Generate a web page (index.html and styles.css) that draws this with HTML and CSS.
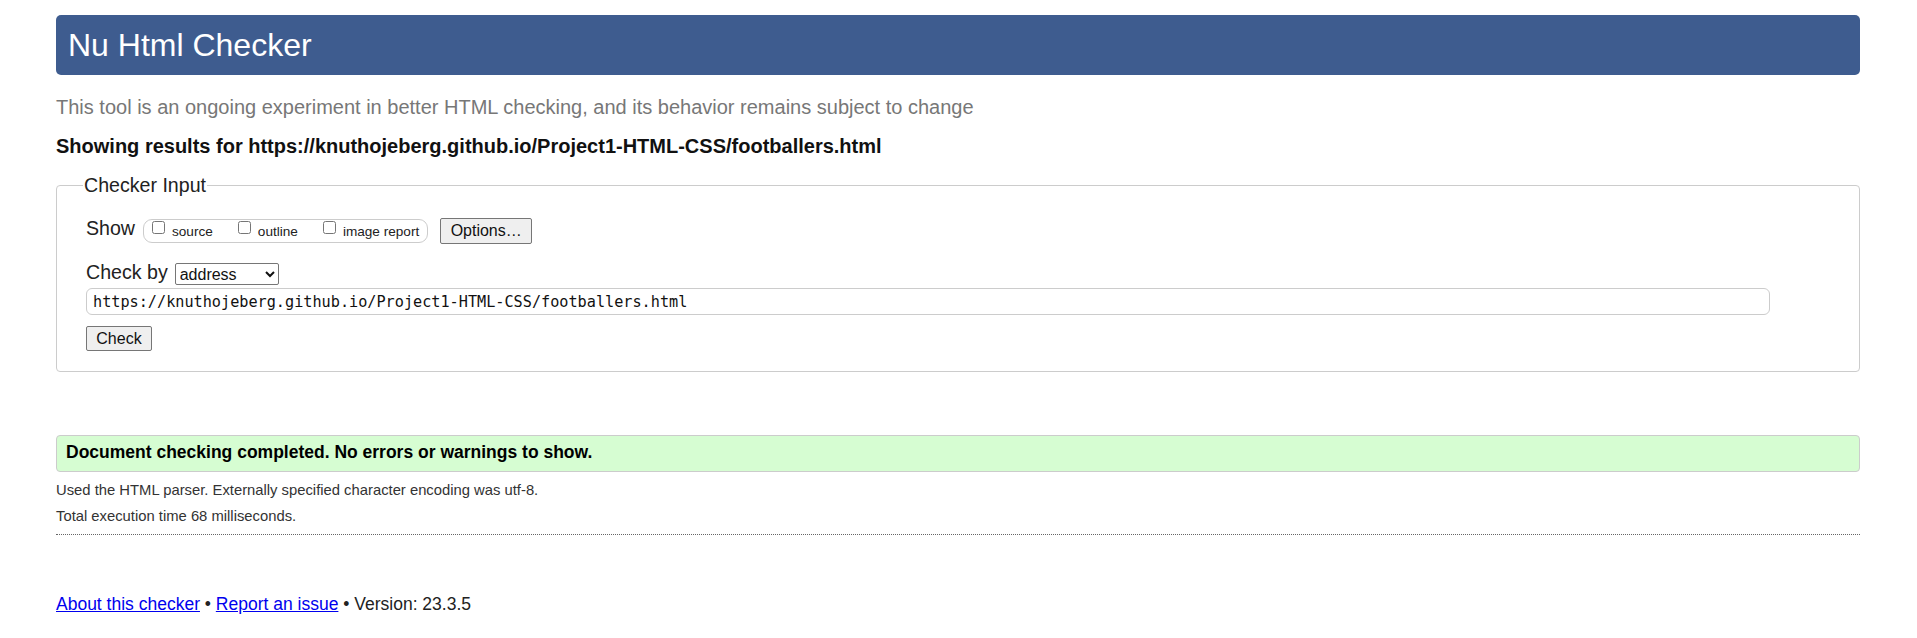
FILE: index.html
```html
<!DOCTYPE html>
<html lang="en">
<head>
<meta charset="utf-8">
<title>Nu Html Checker</title>
<link rel="stylesheet" href="styles.css">
</head>
<body>
<div class="page">
  <h1 class="banner">Nu Html Checker</h1>
  <p class="lede">This tool is an ongoing experiment in better HTML checking, and its behavior remains subject to change</p>
  <p class="showing">Showing results for https://knuthojeberg.github.io/Project1-HTML-CSS/footballers.html</p>
  <fieldset class="input-box">
    <legend class="input-legend">Checker Input</legend>
    <div class="show-row">
      <span class="row-label">Show</span>
      <span class="pill">
        <label class="opt"><input type="checkbox" class="cb"><span class="opt-text">source</span></label>
        <label class="opt"><input type="checkbox" class="cb"><span class="opt-text">outline</span></label>
        <label class="opt"><input type="checkbox" class="cb"><span class="opt-text">image report</span></label>
      </span>
      <button class="btn btn-options" type="button">Options…</button>
    </div>
    <div class="by-row">
      <span class="row-label">Check by</span>
      <select class="sel"><option>address</option></select>
    </div>
    <div class="url-row">
      <input class="url" type="text" value="https://knuthojeberg.github.io/Project1-HTML-CSS/footballers.html">
    </div>
    <div class="check-row">
      <button class="btn btn-check" type="button">Check</button>
    </div>
  </fieldset>
  <div class="success">Document checking completed. No errors or warnings to show.</div>
  <p class="meta">Used the HTML parser. Externally specified character encoding was utf-8.</p>
  <p class="meta meta-second">Total execution time 68 milliseconds.</p>
  <hr class="rule">
  <p class="footer"><a href="#">About this checker</a> • <a href="#">Report an issue</a> • Version: 23.3.5</p>
</div>
</body>
</html>
```

FILE: styles.css
```css
body {
  margin: 0;
  background: #fff;
  color: #222;
  font-family: "Liberation Sans", Arial, sans-serif;
}
.page {
  margin: 0 57px 0 56px;
  padding-top: 15px;
}
.banner {
  margin: 0;
  height: 60px;
  line-height: 60px;
  padding-left: 12px;
  background: #3e5c8f;
  color: #fff;
  font-weight: normal;
  font-size: 32px;
  border-radius: 5px;
}
.lede {
  margin: 21px 0 0 0;
  font-size: 20px;
  color: #777;
  line-height: 23px;
}
.showing {
  margin: 16px 0 0 0;
  font-size: 20px;
  font-weight: bold;
  color: #111;
  line-height: 23px;
}
.input-box {
  margin: 16px 0 0 0;
  padding: 21px 29px 20px 29px;
  border: 1px solid #ccc;
  border-radius: 4px;
}
.input-legend {
  padding: 0 1px;
  margin-left: -3px;
  font-size: 19.6px;
  color: #222;
}
.row-label {
  font-size: 19.6px;
  line-height: 19px;
  color: #222;
  align-self: flex-start;
  margin-top: 1px;
}
.show-row {
  display: flex;
  align-items: center;
  height: 26px;
}
.show-row .row-label {
  margin-right: 8px;
}
.pill {
  display: flex;
  align-items: flex-start;
  box-sizing: border-box;
  height: 24px;
  padding: 0 8px 0 8px;
  border: 1px solid #ccc;
  border-radius: 9px;
  gap: 25px;
}
.opt {
  display: flex;
  align-items: flex-start;
  font-size: 13.6px;
  color: #222;
}
.cb {
  margin: 1px 7px 0 0;
  width: 13px;
  height: 13px;
}
.opt-text {
  line-height: 15px;
  margin-top: 3.5px;
}
.btn {
  font-family: "Liberation Sans", Arial, sans-serif;
  background: #efefef;
  border: 1px solid #767676;
  border-radius: 2px;
  color: #111;
  padding: 0;
}
.btn-options {
  margin-left: 12px;
  height: 26px;
  width: 92px;
  font-size: 16px;
}
.by-row {
  display: flex;
  align-items: flex-start;
  margin-top: 19px;
  height: 22px;
}
.by-row .row-label {
  margin-top: 0;
  margin-right: 7px;
}
.sel {
  width: 104px;
  height: 22px;
  font-family: "Liberation Sans", Arial, sans-serif;
  font-size: 16px;
  border: 1px solid #767676;
  border-radius: 2px;
  background: #fff;
  color: #111;
}
.url-row {
  margin-top: 3px;
}
.url {
  box-sizing: border-box;
  display: block;
  width: 1684px;
  height: 27px;
  padding: 0 6px;
  border: 1px solid #ccc;
  border-radius: 6px;
  font-family: "DejaVu Sans Mono", "Liberation Mono", monospace;
  font-size: 15.2px;
  color: #111;
}
.check-row {
  margin-top: 11px;
  display: flex;
}
.btn-check {
  height: 25px;
  width: 66px;
  font-size: 16px;
}
.success {
  margin: 63px 0 0 0;
  height: 37px;
  line-height: 32px;
  box-sizing: border-box;
  padding-left: 9px;
  background: #d6fdd2;
  border: 1px solid #ccc;
  border-radius: 4px;
  font-weight: bold;
  font-size: 17.5px;
  color: #000;
}
.meta {
  margin: 9px 0 0 0;
  font-size: 14.8px;
  line-height: 18px;
  color: #333;
}
.meta-second {
  margin-top: 8px;
}
.rule {
  margin: 9px 0 0 0;
  border: 0;
  border-top: 1px dotted #666;
  height: 0;
}
.footer {
  margin: 59px 0 0 0;
  font-size: 17.5px;
  line-height: 21px;
  color: #222;
}
.footer a {
  color: #0000ee;
}
```
